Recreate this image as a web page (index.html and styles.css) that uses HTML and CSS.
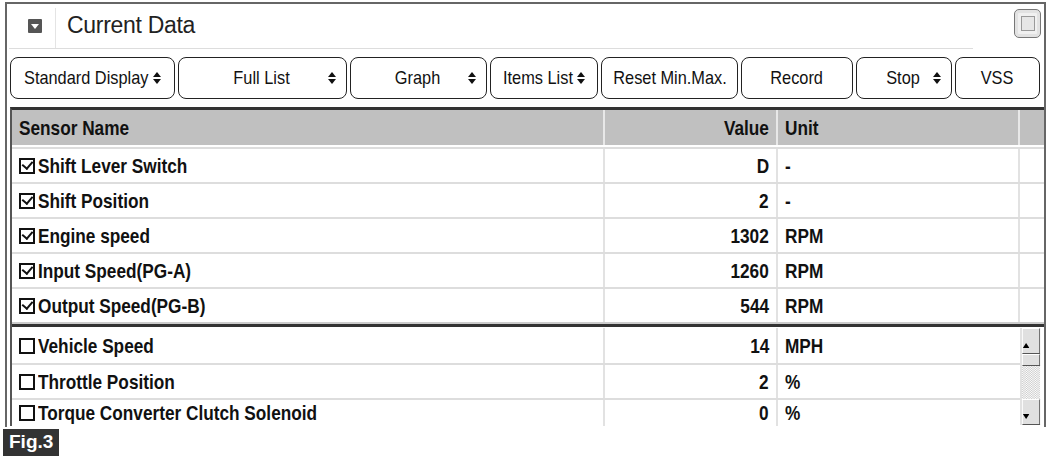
FILE: index.html
```html
<!DOCTYPE html>
<html lang="en">
<head>
  <meta charset="UTF-8" />
  <title>Current Data</title>
  <link rel="stylesheet" href="styles.css">
</head>
<body>
  <div class="panel">
    <div class="titlebar">
      <div class="title-left">
        <span class="collapse"><svg width="12" height="12" viewBox="0 0 12 12"><path d="M2 4h8l-4 5z" fill="#fff"/></svg></span>
        <span class="divider"></span>
        <h1>Current Data</h1>
      </div>
      <span class="maximize"><span></span></span>
    </div>

    <div class="toolbar">
      <button class="w165 tight"><span>Standard Display</span><i class="spin"></i></button>
      <button class="w169 split"><span>Full List</span><i class="spin"></i></button>
      <button class="w137 split"><span>Graph</span><i class="spin"></i></button>
      <button class="w108 tight"><span>Items List</span><i class="spin"></i></button>
      <button class="w137"><span>Reset Min.Max.</span></button>
      <button class="w112"><span>Record</span></button>
      <button class="w96 split"><span>Stop</span><i class="spin"></i></button>
      <button class="w85"><span>VSS</span></button>
    </div>

    <div class="grid">
      <div class="row head">
        <div class="c-name"><span>Sensor Name</span></div>
        <div class="c-val"><span>Value</span></div>
        <div class="c-unit"><span>Unit</span></div>
        <div class="c-end"></div>
      </div>
      <div class="section">
        <div class="row"><div class="c-name"><i class="cb on"></i><span>Shift Lever Switch</span></div><div class="c-val"><span>D</span></div><div class="c-unit"><span>-</span></div><div class="c-end"></div></div>
        <div class="row"><div class="c-name"><i class="cb on"></i><span>Shift Position</span></div><div class="c-val"><span>2</span></div><div class="c-unit"><span>-</span></div><div class="c-end"></div></div>
        <div class="row"><div class="c-name"><i class="cb on"></i><span>Engine speed</span></div><div class="c-val"><span>1302</span></div><div class="c-unit"><span>RPM</span></div><div class="c-end"></div></div>
        <div class="row"><div class="c-name"><i class="cb on"></i><span>Input Speed(PG-A)</span></div><div class="c-val"><span>1260</span></div><div class="c-unit"><span>RPM</span></div><div class="c-end"></div></div>
        <div class="row"><div class="c-name"><i class="cb on"></i><span>Output Speed(PG-B)</span></div><div class="c-val"><span>544</span></div><div class="c-unit"><span>RPM</span></div><div class="c-end"></div></div>
      </div>
      <div class="section lower">
        <div class="rows">
          <div class="row"><div class="c-name"><i class="cb"></i><span>Vehicle Speed</span></div><div class="c-val"><span>14</span></div><div class="c-unit"><span>MPH</span></div></div>
          <div class="row"><div class="c-name"><i class="cb"></i><span>Throttle Position</span></div><div class="c-val"><span>2</span></div><div class="c-unit"><span>%</span></div></div>
          <div class="row last"><div class="c-name"><i class="cb"></i><span>Torque Converter Clutch Solenoid</span></div><div class="c-val"><span>0</span></div><div class="c-unit"><span>%</span></div></div>
        </div>
        <div class="scrollbar">
          <span class="sb-btn"><svg width="8" height="5" viewBox="0 0 8 5"><path d="M0 5h8L4 0z" fill="#000"/></svg></span>
          <span class="sb-thumb"></span>
          <span class="sb-track"></span>
          <span class="sb-btn"><svg width="8" height="5" viewBox="0 0 8 5"><path d="M0 0h8L4 5z" fill="#000"/></svg></span>
        </div>
      </div>
    </div>
  </div>
  <div class="fig">Fig.3</div>
</body>
</html>
```

FILE: styles.css
```css
body {
  margin: 0;
  padding: 2px 0 0 0;
  background: #fff;
  color: #111;
  font-family: "Liberation Sans", Arial, sans-serif;
}
.panel {
  margin-left: 5px;
  width: 1037px;
  height: 423px;
  border: 2px solid #666;
  border-bottom: none;
  overflow: hidden;
}
.titlebar {
  display: flex;
  justify-content: space-between;
  height: 45px;
}
.title-left {
  display: flex;
  align-items: center;
  width: 964px;
  margin-left: 2px;
  border-bottom: 1px solid #ddd;
}
.collapse {
  display: flex;
  align-items: center;
  justify-content: center;
  width: 14px;
  height: 14px;
  margin: 0 0 1px 19px;
  background: #555;
  border-radius: 1px;
}
.divider {
  width: 1px;
  height: 40px;
  margin: 4px 0 0 13px;
  background: #e4e4e4;
}
h1 {
  margin: 0 0 2px 11px;
  font-weight: normal;
  font-size: 23px;
  color: #222;
  letter-spacing: -0.3px;
}
.maximize {
  display: flex;
  align-items: center;
  justify-content: center;
  width: 25px;
  height: 27px;
  margin: 5px 3px 0 0;
  border: 1px solid #777;
  border-radius: 5px;
  background: #f0f0f0;
  box-shadow: inset 0 0 0 3px #e2e2e2;
}
.maximize span {
  width: 12px;
  height: 13px;
  border: 1px solid #999;
  background: #e6e6e6;
}
.toolbar {
  display: flex;
  gap: 3px;
  padding: 8px 0 0 3px;
  height: 42px;
}
.toolbar button {
  display: flex;
  align-items: center;
  justify-content: center;
  gap: 0;
  height: 42px;
  padding: 0 4px;
  border: 1.5px solid #222;
  border-radius: 8px;
  background: #fff;
  font-family: inherit;
  font-size: 19px;
  color: #111;
  white-space: nowrap;
}
.toolbar button span {
  display: inline-block;
  transform: scaleX(0.86);
}
.toolbar button.split {
  justify-content: flex-end;
  padding-right: 10px;
}
.toolbar button.split span {
  flex: 1;
  text-align: center;
  padding-left: 14px;
}
.toolbar button.tight span {
  transform-origin: left center;
}
.w165 span { margin-right: -20px; }
.w108 span { margin-right: -12px; }
.toolbar button.tight .spin { margin-left: 5px; }
.w165 { width: 165px; }
.w169 { width: 169px; }
.w137 { width: 137px; }
.w108 { width: 108px; }
.w112 { width: 112px; }
.w96 { width: 96px; }
.w85 { width: 85px; }
.spin {
  display: inline-flex;
  flex-direction: column;
  gap: 2px;
}
.spin::before,
.spin::after {
  content: "";
  width: 0;
  height: 0;
  border-left: 4px solid transparent;
  border-right: 4px solid transparent;
}
.spin::before { border-bottom: 5px solid #111; }
.spin::after { border-top: 5px solid #111; }

.grid {
  margin: 8px 0 0 3px;
  border-top: 3px solid #333;
  border-left: 2px solid #555;
  font-weight: bold;
  font-size: 21px;
}
.grid span {
  display: inline-block;
  transform: scaleX(0.82);
  transform-origin: left center;
}
.grid .c-val span { transform-origin: right center; }
.row {
  display: grid;
  grid-template-columns: 593px 173px 242px 22px;
  height: 33px;
  border-bottom: 2px solid #ddd;
}
.row > div {
  display: flex;
  align-items: center;
  border-right: 2px solid #e2e2e2;
  overflow: hidden;
  white-space: nowrap;
}
.head {
  height: 35px;
  background: #c0c0c0;
  border-bottom: 2px solid #fff;
  box-shadow: 0 2px 0 #ddd;
  margin-bottom: 2px;
}
.head > div { border-right-color: #e8e8e8; }
.c-name { padding-left: 7px; }
.c-val { justify-content: flex-end; padding-right: 7px; }
.c-unit { padding-left: 7px; }
.row > .c-end { border-right: none; }
.lower .row:first-child { height: 35px; }
.row.last { height: 26px; border-bottom: none; }
.row.last > div { align-items: flex-start; padding-top: 1px; }
.cb {
  display: inline-flex;
  flex: none;
  width: 12px;
  height: 12px;
  margin: 4px 3px 0 0;
  border: 2px solid #111;
}
.row:not(.last) .cb { margin-top: 0; }
.cb.on::after {
  content: "";
  width: 5px;
  height: 8px;
  margin: -1px 0 0 3px;
  border: solid #111;
  border-width: 0 2.5px 2.5px 0;
  transform: rotate(40deg);
}
.section.lower {
  display: flex;
  border-top: 3px solid #333;
  padding-top: 1px;
  box-shadow: 0 -2px 0 #ccc;
}
.lower .rows { width: 1008px; }
.lower .row { grid-template-columns: 593px 173px 242px; }
.lower .row > .c-unit { border-right: none; }
.scrollbar {
  display: flex;
  flex-direction: column;
  width: 22px;
  height: 97px;
  border-left: 2px solid #e2e2e2;
}
.sb-btn,
.sb-thumb {
  display: flex;
  align-items: center;
  justify-content: center;
  background: #e0e0e0;
  border: 1px solid;
  border-color: #fff #555 #555 #fff;
}
.sb-btn { height: 24px; }
.sb-thumb { height: 10px; }
.sb-track {
  flex: 1;
  background: repeating-conic-gradient(#ccc 0 25%, #fff 0 50%) 0 0 / 2px 2px;
}
.fig {
  display: inline-block;
  margin: 2px 0 0 3px;
  padding: 2px 6px 3px;
  background: #333;
  color: #fff;
  font-weight: bold;
  font-size: 19px;
}
```
